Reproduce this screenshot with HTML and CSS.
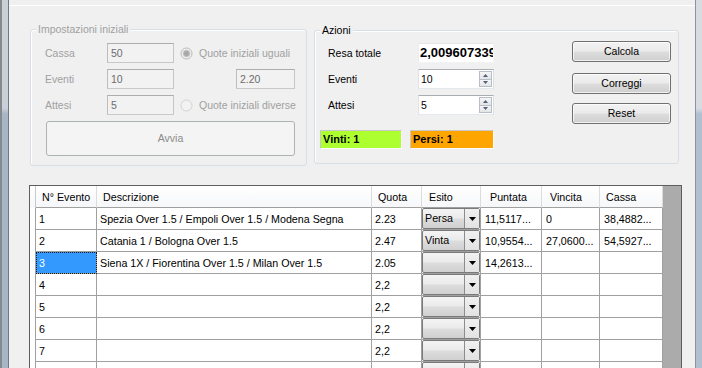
FILE: index.html
```html
<!DOCTYPE html>
<html lang="it">
<head>
<meta charset="utf-8">
<title>Gestione eventi</title>
<link rel="stylesheet" href="styles.css">
</head>
<body>
<div class="window">
  <div class="frame-left"></div>
  <div class="client">
    <div class="menu-edge"></div>
    <div class="top">
      <div class="group g1">
        <span class="group-title disabled-text">Impostazioni iniziali</span>
        <div class="g1-grid">
          <span class="lbl disabled-text">Cassa</span>
          <div class="tb tb-disabled">50</div>
          <div class="radio-row">
            <svg class="radio" width="13" height="13" viewBox="0 0 13 13"><circle cx="6.5" cy="6.5" r="5.5" fill="#efefef" stroke="#b9b9b9"/><circle cx="6.5" cy="6.5" r="3.2" fill="#a9a9a9" stroke="#c4c4c4" stroke-width="1"/></svg>
            <span class="disabled-text">Quote iniziali uguali</span>
          </div>
          <span class="lbl disabled-text">Eventi</span>
          <div class="tb tb-disabled">10</div>
          <div class="quote-cell"><div class="tb tb-disabled tb-quote">2.20</div></div>
          <span class="lbl disabled-text">Attesi</span>
          <div class="tb tb-disabled">5</div>
          <div class="radio-row">
            <svg class="radio" width="13" height="13" viewBox="0 0 13 13"><circle cx="6.5" cy="6.5" r="5.5" fill="#f2f2f2" stroke="#d2d2d2"/></svg>
            <span class="disabled-text">Quote iniziali diverse</span>
          </div>
          <div class="btn-disabled">Avvia</div>
        </div>
      </div>
      <div class="group g2">
        <span class="group-title">Azioni</span>
        <div class="fields">
          <div class="field"><span class="field-lbl">Resa totale</span><div class="tb tb-resa">2,009607339</div></div>
          <div class="field"><span class="field-lbl">Eventi</span>
            <div class="tb spin"><span class="spin-text">10</span>
              <div class="spin-btns">
                <div class="sb"><svg width="5" height="3" viewBox="0 0 5 3"><path d="M0 3 L2.5 0 L5 3 Z" fill="#4f5f7c"/></svg></div>
                <div class="sb"><svg width="5" height="3" viewBox="0 0 5 3"><path d="M0 0 L5 0 L2.5 3 Z" fill="#4f5f7c"/></svg></div>
              </div>
            </div>
          </div>
          <div class="field"><span class="field-lbl">Attesi</span>
            <div class="tb spin"><span class="spin-text">5</span>
              <div class="spin-btns">
                <div class="sb"><svg width="5" height="3" viewBox="0 0 5 3"><path d="M0 3 L2.5 0 L5 3 Z" fill="#4f5f7c"/></svg></div>
                <div class="sb"><svg width="5" height="3" viewBox="0 0 5 3"><path d="M0 0 L5 0 L2.5 3 Z" fill="#4f5f7c"/></svg></div>
              </div>
            </div>
          </div>
          <div class="badges">
            <div class="badge badge-win">Vinti: 1</div>
            <div class="badge badge-lose">Persi: 1</div>
          </div>
        </div>
        <div class="buttons">
          <div class="btn">Calcola</div>
          <div class="btn btn-2">Correggi</div>
          <div class="btn btn-3">Reset</div>
        </div>
      </div>
    </div>

    <div class="grid">
      <div class="row head">
        <div class="c rh"></div>
        <div class="c">N° Evento</div>
        <div class="c">Descrizione</div>
        <div class="c">Quota</div>
        <div class="c h-esito">Esito</div>
        <div class="c h-puntata">Puntata</div>
        <div class="c h-vincita">Vincita</div>
        <div class="c">Cassa</div>
      </div>
      <div class="row">
        <div class="c rh"></div>
        <div class="c">1</div>
        <div class="c">Spezia Over 1.5 / Empoli Over 1.5 / Modena Segna</div>
        <div class="c">2.23</div>
        <div class="c esito"><div class="combo"><span class="combo-text">Persa</span><span class="combo-btn"><svg width="7" height="4" viewBox="0 0 7 4"><path d="M0 0 H7 L3.5 4 Z" fill="#000"/></svg></span></div></div>
        <div class="c num">11,5117...</div>
        <div class="c num">0</div>
        <div class="c num">38,4882...</div>
      </div>
      <div class="row">
        <div class="c rh"></div>
        <div class="c">2</div>
        <div class="c">Catania 1 / Bologna Over 1.5</div>
        <div class="c">2.47</div>
        <div class="c esito"><div class="combo"><span class="combo-text">Vinta</span><span class="combo-btn"><svg width="7" height="4" viewBox="0 0 7 4"><path d="M0 0 H7 L3.5 4 Z" fill="#000"/></svg></span></div></div>
        <div class="c num">10,9554...</div>
        <div class="c num">27,0600...</div>
        <div class="c num">54,5927...</div>
      </div>
      <div class="row">
        <div class="c rh"></div>
        <div class="c selected">3</div>
        <div class="c">Siena 1X / Fiorentina Over 1.5 / Milan Over 1.5</div>
        <div class="c">2.05</div>
        <div class="c esito"><div class="combo"><span class="combo-text"></span><span class="combo-btn"><svg width="7" height="4" viewBox="0 0 7 4"><path d="M0 0 H7 L3.5 4 Z" fill="#000"/></svg></span></div></div>
        <div class="c num">14,2613...</div>
        <div class="c num"></div>
        <div class="c num"></div>
      </div>
      <div class="row">
        <div class="c rh"></div>
        <div class="c">4</div>
        <div class="c"></div>
        <div class="c">2,2</div>
        <div class="c esito"><div class="combo"><span class="combo-text"></span><span class="combo-btn"><svg width="7" height="4" viewBox="0 0 7 4"><path d="M0 0 H7 L3.5 4 Z" fill="#000"/></svg></span></div></div>
        <div class="c num"></div>
        <div class="c num"></div>
        <div class="c num"></div>
      </div>
      <div class="row">
        <div class="c rh"></div>
        <div class="c">5</div>
        <div class="c"></div>
        <div class="c">2,2</div>
        <div class="c esito"><div class="combo"><span class="combo-text"></span><span class="combo-btn"><svg width="7" height="4" viewBox="0 0 7 4"><path d="M0 0 H7 L3.5 4 Z" fill="#000"/></svg></span></div></div>
        <div class="c num"></div>
        <div class="c num"></div>
        <div class="c num"></div>
      </div>
      <div class="row">
        <div class="c rh"></div>
        <div class="c">6</div>
        <div class="c"></div>
        <div class="c">2,2</div>
        <div class="c esito"><div class="combo"><span class="combo-text"></span><span class="combo-btn"><svg width="7" height="4" viewBox="0 0 7 4"><path d="M0 0 H7 L3.5 4 Z" fill="#000"/></svg></span></div></div>
        <div class="c num"></div>
        <div class="c num"></div>
        <div class="c num"></div>
      </div>
      <div class="row">
        <div class="c rh"></div>
        <div class="c">7</div>
        <div class="c"></div>
        <div class="c">2,2</div>
        <div class="c esito"><div class="combo"><span class="combo-text"></span><span class="combo-btn"><svg width="7" height="4" viewBox="0 0 7 4"><path d="M0 0 H7 L3.5 4 Z" fill="#000"/></svg></span></div></div>
        <div class="c num"></div>
        <div class="c num"></div>
        <div class="c num"></div>
      </div>
      <div class="row">
        <div class="c rh"></div>
        <div class="c"></div>
        <div class="c"></div>
        <div class="c"></div>
        <div class="c esito"><div class="combo"><span class="combo-text"></span><span class="combo-btn"></span></div></div>
        <div class="c num"></div>
        <div class="c num"></div>
        <div class="c num"></div>
      </div>
    </div>
  </div>
  <div class="frame-right"></div>
</div>
</body>
</html>
```
FILE: styles.css
```css
* { box-sizing: border-box; }
html, body { margin: 0; padding: 0; }
body {
  width: 702px;
  height: 368px;
  overflow: hidden;
  background: #f0f0f0;
  color: #000;
  font-family: "Liberation Sans", Arial, sans-serif;
  font-size: 10.5px;
}
.window { display: flex; height: 368px; }
.frame-left {
  flex: none;
  width: 9px;
  border-left: 2px solid #858a8f;
  border-right: 1px solid #6f777f;
  background: linear-gradient(#c9d0d7 0, #c9d0d7 108px, #a6b6c6 114px, #a6b6c6 100%);
}
.frame-right {
  flex: none;
  width: 7px;
  border-left: 1px solid #8c949b;
  background: linear-gradient(#d6dce2 0, #d6dce2 108px, #b1c0cf 114px, #b1c0cf 100%);
}
.client { flex: none; width: 686px; background: #f0f0f0; }
.menu-edge { height: 6px; border-bottom: 1px solid #fff; }

.top {
  display: flex;
  align-items: flex-start;
  gap: 7px;
  margin: 23px 0 0 21px;
}
.group {
  position: relative;
  border: 1px solid #d5dfe5;
  border-radius: 3px;
  box-shadow: inset 1px 1px 0 #fff;
}
.group-title {
  position: absolute;
  top: -7px;
  left: 5px;
  padding: 0 2px;
  line-height: 12px;
  background: #f0f0f0;
}
.disabled-text { color: #a0a0a0; }

.g1 { width: 277px; height: 137px; padding: 13px 10px 8px 14px; }
.g1-grid {
  display: grid;
  grid-template-columns: 62px 67px 1fr;
  grid-template-rows: 20px 20px 20px 35px;
  row-gap: 6px;
  align-items: center;
}
.radio-row { display: flex; align-items: center; gap: 6px; padding-left: 6px; }
.radio { display: block; flex: none; }
.quote-cell { padding-left: 62px; }

.tb {
  height: 20px;
  border: 1px solid;
  border-color: #abadb3 #dbdfe6 #e3e9ef #e2e3ea;
  background: #fff;
  padding-left: 3px;
  line-height: 18px;
  white-space: nowrap;
  overflow: hidden;
}
.tb-disabled {
  background: #f2f2f2;
  border-color: #adadad #c6c6c6 #c9c9c9 #bdbdbd;
  color: #6d6d6d;
}
.tb-quote { width: 59px; }
.btn-disabled {
  grid-column: 1 / -1;
  width: 249px;
  height: 35px;
  margin-left: 1px;
  border: 1px solid #adb2b5;
  border-radius: 3px;
  background: #f4f4f4;
  color: #8a8a8a;
  text-align: center;
  line-height: 33px;
}

.g2 {
  width: 365px;
  height: 134px;
  margin-top: 1px;
  padding: 10px 0 0 5px;
  display: flex;
  align-items: flex-start;
}
.fields { width: 174px; display: flex; flex-direction: column; gap: 6px; padding-top: 2px; }
.field { display: flex; align-items: center; height: 20px; padding-left: 8px; }
.field-lbl { width: 90px; flex: none; }
.field .tb { width: 76px; }
.tb-resa {
  border-color: #e6e6e6 #f3f3f3 #f3f3f3 #ededed;
  font-weight: bold;
  font-size: 13px;
  padding-left: 1px;
}
.spin { display: flex; padding-left: 0; }
.spin-text { flex: 1; padding-left: 2px; }
.spin-btns {
  width: 14px;
  flex: none;
  display: flex;
  flex-direction: column;
  padding: 1px 1px 1px 0;
}
.sb {
  flex: 1;
  display: flex;
  align-items: center;
  justify-content: center;
  border: 1px solid #b8bec8;
  background: linear-gradient(#f6f6f6, #e3e4e6);
}
.sb + .sb { border-top: none; }
.badges { display: flex; gap: 8px; margin-top: 9px; padding-left: 0; }
.badge {
  height: 19px;
  border: 1px solid;
  border-color: #c8c8c8 #fdfdfd #fdfdfd #c8c8c8;
  font-weight: bold;
  font-size: 11px;
  line-height: 17px;
  padding-left: 2px;
}
.badge-win { width: 82px; background: #adff2f; }
.badge-lose { width: 84px; background: #ffa500; }

.buttons { margin-left: 78px; display: flex; flex-direction: column; }
.btn {
  width: 99px;
  height: 21px;
  border: 1px solid #707070;
  border-radius: 3px;
  background: linear-gradient(#f2f2f2 0%, #ebebeb 48%, #dddddd 52%, #cfcfcf 100%);
  box-shadow: inset 0 0 0 1px rgba(255,255,255,0.7);
  text-align: center;
  line-height: 19px;
}
.btn-2 { margin-top: 11px; }
.btn-3 { margin-top: 9px; }

.grid {
  margin: 19px 0 0 20px;
  width: 653px;
  height: 200px;
  border: 1px solid #5e5e5e;
  background: #ababab;
  overflow: hidden;
  font-size: 10.7px;
}
.row {
  display: grid;
  grid-template-columns: 6px 61px 275px 50px 59px 61px 58px 63px;
  height: 22px;
}
.c {
  border-right: 1px solid #a0a0a0;
  border-bottom: 1px solid #a0a0a0;
  background: #fff;
  padding-left: 3px;
  padding-top: 1px;
  line-height: 20px;
  white-space: nowrap;
  overflow: hidden;
}
.c.rh { border-bottom: none; padding: 0; }
.c.num { padding-left: 4px; }
.head .c {
  background: linear-gradient(#ffffff, #f6f7f9);
  border-right-color: #dcdcdc;
  padding-left: 6px;
}
.head .c.rh { border-right-color: #c8c8c8; padding: 0; }
.head .h-esito { padding-left: 7px; }
.head .h-puntata { padding-left: 9px; }
.head .h-vincita { padding-left: 8px; }
.c.selected {
  background: #3399ff;
  color: #fff;
  outline: 1px dotted #1a1a1a;
  outline-offset: -1px;
}
.c.esito { padding: 0; }
.combo {
  display: flex;
  height: 21px;
  border: 1px solid #7a7a7a;
  border-radius: 2px;
  background: linear-gradient(#f4f4f4 0%, #ebebeb 45%, #dcdcdc 55%, #d0d0d0 100%);
}
.combo-text { flex: 1; padding-left: 2px; line-height: 19px; }
.combo-btn {
  width: 15px;
  flex: none;
  display: flex;
  align-items: center;
  justify-content: center;
  border-left: 1px solid #8c8c8c;
  background: linear-gradient(#f0f0f0, #e2e2e2);
}
```
